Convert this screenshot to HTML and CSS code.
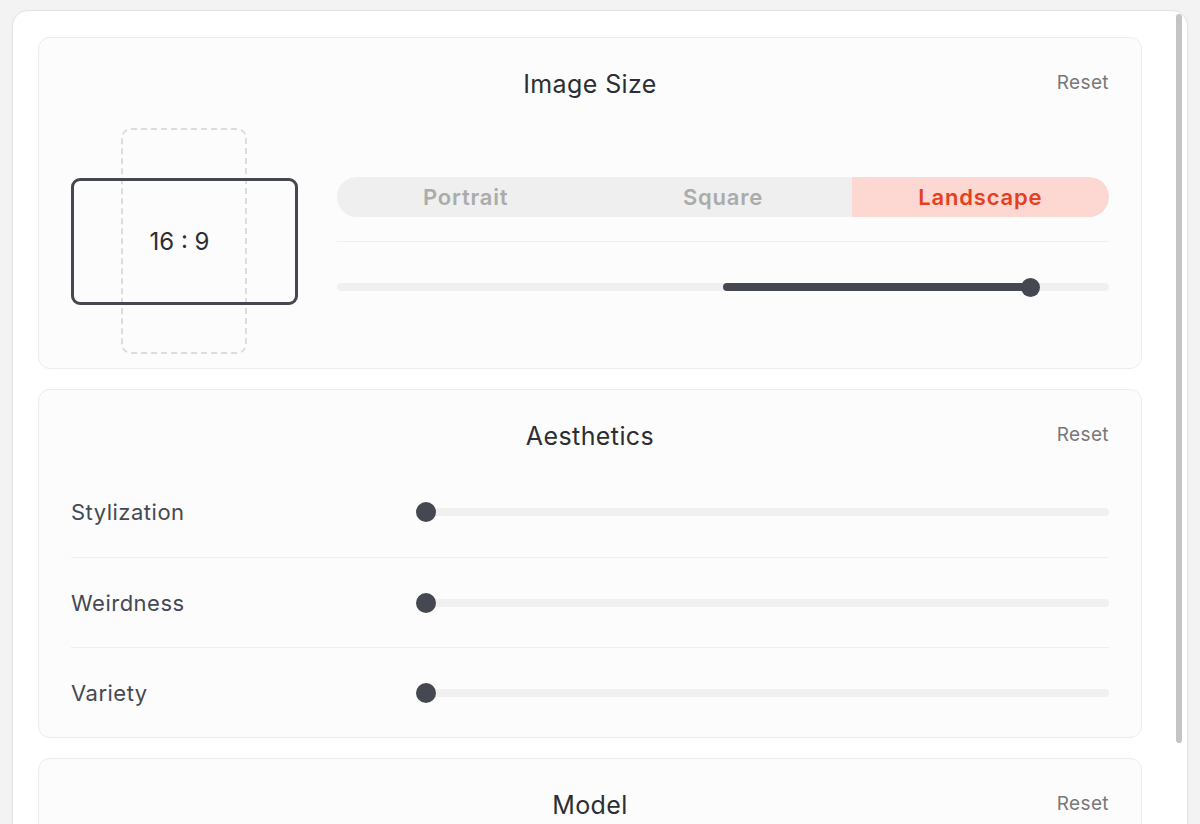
FILE: index.html
```html
<!DOCTYPE html>
<html lang="en">
<head>
<meta charset="utf-8">
<title>Settings</title>
<link rel="stylesheet" href="styles.css">
</head>
<body>
<div class="panel">
  <div class="scrollbar"><div class="scroll-thumb"></div></div>

  <section class="card">
    <header class="card-head">
      <h2 class="card-title">Image Size</h2>
      <button class="reset">Reset</button>
    </header>
    <div class="size-body">
      <div class="preview">
        <div class="ghost"></div>
        <div class="frame"><span class="ratio">16 : 9</span></div>
      </div>
      <div class="size-controls">
        <div class="segmented">
          <button class="seg">Portrait</button>
          <button class="seg">Square</button>
          <button class="seg active">Landscape</button>
        </div>
        <div class="rule"></div>
        <div class="slider wide">
          <div class="fill" style="left:50%;width:39.8%"></div>
          <div class="thumb" style="left:89.8%"></div>
        </div>
      </div>
    </div>
  </section>

  <section class="card">
    <header class="card-head">
      <h2 class="card-title">Aesthetics</h2>
      <button class="reset">Reset</button>
    </header>
    <div class="rows">
      <div class="row">
        <span class="label">Stylization</span>
        <div class="slider"><div class="thumb start"></div></div>
      </div>
      <div class="row">
        <span class="label">Weirdness</span>
        <div class="slider"><div class="thumb start"></div></div>
      </div>
      <div class="row">
        <span class="label">Variety</span>
        <div class="slider"><div class="thumb start"></div></div>
      </div>
    </div>
  </section>

  <section class="card">
    <header class="card-head">
      <h2 class="card-title">Model</h2>
      <button class="reset">Reset</button>
    </header>
    <div class="model-body"></div>
  </section>
</div>
</body>
</html>
```

FILE: styles.css
```css
html, body {
  margin: 0;
  height: 824px;
  overflow: hidden;
  background: #f3f3f3;
  font-family: "Inter", "Noto Sans", sans-serif;
  color: #2f3136;
}

.panel {
  position: relative;
  margin: 10px 12px 0;
  min-height: 900px;
  background: #ffffff;
  border: 1px solid #e4e4e4;
  border-radius: 16px;
  padding: 26px 45px 0 25px;
  box-shadow: 0 1px 3px rgba(0, 0, 0, 0.04);
  display: flex;
  flex-direction: column;
  gap: 20px;
}

.scrollbar {
  position: absolute;
  top: 3px;
  right: 5px;
  width: 6px;
  height: 729px;
}

.scroll-thumb {
  height: 100%;
  border-radius: 3px;
  background: #c4c4c4;
}

.card {
  background: #fcfcfc;
  border: 1px solid #ececec;
  border-radius: 12px;
  padding: 0 32px;
}

.card-head {
  position: relative;
  padding-top: 32px;
  height: 28px;
  display: flex;
  justify-content: center;
  align-items: center;
}

.card-title {
  margin: 0;
  font-size: 25px;
  font-weight: 400;
  line-height: 28px;
  letter-spacing: 0.4px;
  color: #2c2e33;
}

.reset {
  position: absolute;
  right: 0;
  top: 30px;
  height: 28px;
  padding: 0;
  border: 0;
  background: none;
  font: inherit;
  font-size: 19px;
  letter-spacing: 0.4px;
  color: #787878;
  cursor: pointer;
}

/* image size */
.size-body {
  display: flex;
  gap: 39px;
  padding: 30px 0 14px;
}

.preview {
  position: relative;
  flex: 0 0 226px;
  height: 226px;
  display: flex;
  align-items: center;
  justify-content: center;
}

.ghost {
  position: absolute;
  left: 50px;
  top: 0;
  width: 122px;
  height: 222px;
  border: 2px dashed #dcdcdc;
  border-radius: 10px;
}

.frame {
  position: relative;
  box-sizing: border-box;
  width: 227px;
  height: 127px;
  border: 3px solid #454851;
  border-radius: 9px;
  display: flex;
  align-items: center;
  justify-content: center;
}

.ratio {
  font-size: 24px;
  color: #2c2e33;
  margin-right: 10px;
}

.size-controls {
  flex: 1;
  padding-top: 49px;
  display: flex;
  flex-direction: column;
}

.segmented {
  display: grid;
  grid-template-columns: repeat(3, 1fr);
  height: 40px;
  border-radius: 20px;
  background: #efefef;
  overflow: hidden;
}

.seg {
  border: 0;
  background: none;
  font: inherit;
  font-size: 22px;
  font-weight: 600;
  letter-spacing: 0.8px;
  color: #ababab;
  padding: 0;
}

.seg.active {
  background: #fdd8d2;
  color: #e5401d;
  border-radius: 0 20px 20px 0;
}

.rule {
  margin-top: 24px;
  height: 1px;
  background: #efefef;
}

.slider {
  position: relative;
  height: 8px;
  border-radius: 4px;
  background: #f0f0f0;
}

.slider.wide {
  margin-top: 41px;
}

.fill {
  position: absolute;
  top: 0;
  height: 8px;
  border-radius: 4px;
  background: #454851;
}

.thumb {
  position: absolute;
  top: 50%;
  width: 19px;
  height: 19px;
  margin: -9.5px 0 0 -9.5px;
  border-radius: 50%;
  background: #454851;
}

.thumb.start {
  left: 10px;
  width: 20px;
  height: 20px;
  margin: -10px 0 0 -10px;
}

/* aesthetics */
.rows {
  padding-top: 17px;
}

.row {
  height: 90px;
  display: grid;
  grid-template-columns: 345px 1fr;
  align-items: center;
  border-top: 1px solid #efefef;
  box-sizing: border-box;
}

.row:first-child {
  border-top: 0;
}

.label {
  font-size: 22px;
  letter-spacing: 0.5px;
  color: #454953;
}

.model-body {
  height: 120px;
}
```
